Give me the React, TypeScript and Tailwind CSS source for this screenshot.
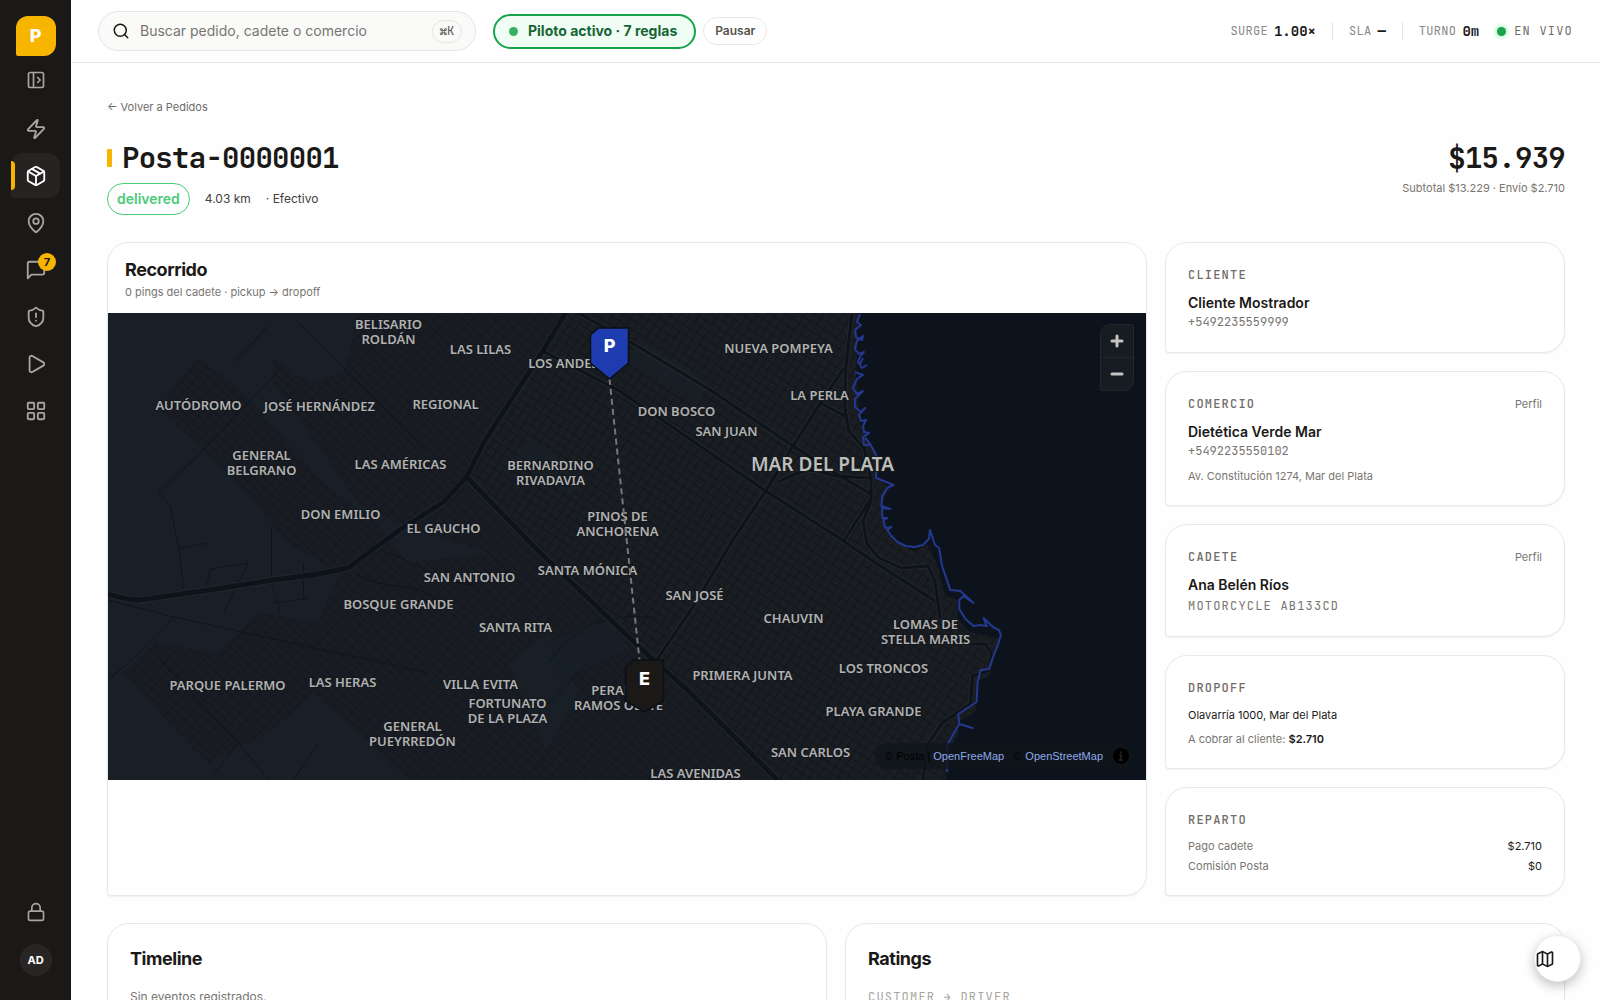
import type { ReactNode } from "react";
import { LayoutGrid, Lock, Map, MapPin, Package, PanelLeftOpen, Play, Search, ShieldAlert, Zap } from "lucide-react";

const CARD = "bg-white border border-[#e9e9e8] rounded-[22px] rounded-bl-[4px] shadow-[0_1px_2px_rgba(0,0,0,0.06)]";
const MONO = "font-['JetBrains_Mono','Liberation_Mono',monospace]";

function MessageIcon() {
  return (
    <svg width="22" height="22" viewBox="0 0 24 24" fill="none" stroke="currentColor" strokeWidth="2" strokeLinecap="round" strokeLinejoin="round">
      <path d="M21 15a2 2 0 0 1-2 2H7l-4 4V5a2 2 0 0 1 2-2h14a2 2 0 0 1 2 2z" />
    </svg>
  );
}

interface NavItemProps {
  label: string;
  active?: boolean;
  badge?: number;
  children: ReactNode;
}

function NavItem({ label, active, badge, children }: NavItemProps) {
  return (
    <a
      href="#"
      aria-label={label}
      className={`relative flex h-[45px] w-[49px] items-center justify-center rounded-xl rounded-bl-[2px] ${
        active ? "bg-[#262322] text-white" : "text-[#a8a5a1]"
      }`}
    >
      {active && <span className="absolute left-0 top-2 h-[29px] w-[4px] rounded-r-sm bg-[#f7b500]" />}
      {children}
      {badge && (
        <span className="absolute right-[4px] top-[6px] flex h-[18px] w-[18px] items-center justify-center rounded-full bg-[#f7b500] text-[11px] font-bold text-[#1b1917]">
          {badge}
        </span>
      )}
    </a>
  );
}

function Sidebar() {
  return (
    <aside className="flex h-full w-[71px] shrink-0 flex-col items-center bg-[#1b1917] pb-6 pt-4">
      <a href="#" className="flex h-10 w-10 items-center justify-center rounded-xl rounded-bl-[2px] bg-[#f7b500] text-lg font-extrabold text-white">
        P
      </a>
      <button aria-label="Expandir menú" className="mt-[14px] text-[#a8a5a1]">
        <PanelLeftOpen size={20} />
      </button>
      <nav className="mt-4 flex flex-col gap-[2px]">
        <NavItem label="Centro de control"><Zap size={22} /></NavItem>
        <NavItem label="Pedidos" active><Package size={22} /></NavItem>
        <NavItem label="Mapa"><MapPin size={22} /></NavItem>
        <NavItem label="Mensajes" badge={7}><MessageIcon /></NavItem>
        <NavItem label="Alertas"><ShieldAlert size={22} /></NavItem>
        <NavItem label="Simulador"><Play size={22} /></NavItem>
        <NavItem label="Más"><LayoutGrid size={22} /></NavItem>
      </nav>
      <button aria-label="Bloquear sesión" className="mt-auto text-[#a8a5a1]">
        <Lock size={20} />
      </button>
      <button className="mt-[22px] h-8 w-8 rounded-full bg-[#292524] text-[11px] font-bold text-white">AD</button>
    </aside>
  );
}

function Metric({ label, value }: { label: string; value: string }) {
  return (
    <div className="flex items-center gap-[6px]">
      <span className="text-xs tracking-wide text-[#8b8884]">{label}</span>
      <span className="text-sm font-bold text-[#1b1917]">{value}</span>
    </div>
  );
}

function TopBar() {
  return (
    <header className="flex h-[63px] shrink-0 items-center border-b border-[#e9e9e8] bg-white px-[27px]">
      <label className="flex h-10 w-[378px] items-center rounded-full border border-[#e7e5e4] bg-[#fafaf9] px-[13px]">
        <Search size={18} className="shrink-0 text-[#1b1917]" />
        <input
          type="search"
          aria-label="Buscar"
          placeholder="Buscar pedido, cadete o comercio"
          className="ml-[10px] min-w-0 flex-1 bg-transparent text-sm outline-none placeholder:text-[#787571]"
        />
        <kbd className={`${MONO} flex h-[23px] w-[30px] shrink-0 items-center justify-center rounded-full border border-[#e7e5e4] text-xs text-[#57534e]`}>⌘K</kbd>
      </label>
      <button className="ml-[17px] flex h-[35px] items-center gap-[10px] rounded-full border-2 border-[#16a34a] bg-[#f0fdf4] pl-[14px] pr-[17px] text-sm font-bold text-[#166534]">
        <span className="h-[9px] w-[9px] rounded-full bg-[#38b164]" />
        Piloto activo · 7 reglas
      </button>
      <button className="ml-[7px] h-[28px] rounded-full border border-[#e9e9e8] bg-white px-[11px] text-xs font-semibold text-[#57534e]">Pausar</button>
      <div className={`${MONO} ml-auto flex items-center whitespace-nowrap`}>
        <Metric label="SURGE" value="1.00×" />
        <span className="mx-4 h-[18px] w-px bg-[#e7e5e4]" />
        <Metric label="SLA" value="—" />
        <span className="mx-4 h-[18px] w-px bg-[#e7e5e4]" />
        <Metric label="TURNO" value="0m" />
        <span className="ml-[18px] h-[9px] w-[9px] rounded-full bg-[#16a34a] shadow-[0_0_4px_2px_#bbf7d0]" />
        <span className="ml-2 text-xs tracking-widest text-[#6f6c68]">EN VIVO</span>
      </div>
    </header>
  );
}

type MapLabel = [x: number, y: number, ...lines: string[]];

const LABELS: MapLabel[] = [
  [280, 11, "BELISARIO", "ROLDÁN"],
  [372, 36, "LAS LILAS"],
  [455, 50, "LOS ANDES"],
  [670, 35, "NUEVA POMPEYA"],
  [711, 82, "LA PERLA"],
  [568, 98, "DON BOSCO"],
  [618, 118, "SAN JUAN"],
  [90, 92, "AUTÓDROMO"],
  [211, 93, "JOSÉ HERNÁNDEZ"],
  [337, 91, "REGIONAL"],
  [153, 142, "GENERAL", "BELGRANO"],
  [292, 151, "LAS AMÉRICAS"],
  [442, 152, "BERNARDINO", "RIVADAVIA"],
  [232, 201, "DON EMILIO"],
  [335, 215, "EL GAUCHO"],
  [509, 203, "PINOS DE", "ANCHORENA"],
  [361, 264, "SAN ANTONIO"],
  [479, 257, "SANTA MÓNICA"],
  [290, 291, "BOSQUE GRANDE"],
  [407, 314, "SANTA RITA"],
  [586, 282, "SAN JOSÉ"],
  [685, 305, "CHAUVIN"],
  [817, 311, "LOMAS DE", "STELLA MARIS"],
  [634, 362, "PRIMERA JUNTA"],
  [775, 355, "LOS TRONCOS"],
  [765, 398, "PLAYA GRANDE"],
  [702, 439, "SAN CARLOS"],
  [587, 460, "LAS AVENIDAS"],
  [119, 372, "PARQUE PALERMO"],
  [234, 369, "LAS HERAS"],
  [372, 371, "VILLA EVITA"],
  [399, 390, "FORTUNATO", "DE LA PLAZA"],
  [304, 413, "GENERAL", "PUEYRREDÓN"],
  [510, 377, "PERALTA", "RAMOS OESTE"],
];

const COAST =
  "M748 0l-3 8 4 3-6 5 1 7 6 3 1-4-6 5-2 8 4 5 5-2-4 5-2 5 4 6 5-3M751 44l-3 6M743 58l8 3-6 4-4 9 4 6 6-3-8 8v8l6 5 4-4-6 7 2 6 5-1-3 6 1 6 5 1-6 4 1 8 6 0M753 124l5 6 6 11v23l17 7-6 3-5 8-1 10 9 3-8-1 0 10 5 0-4 2 2 8 6-1-4 3 4 6 6 6 8 4 9 1 8-2 6-6 1-9 5 15 4 3 3 18 8 24 10 1 13 12-10-7-4 4 0 9 6 10 8 7 7-1 6 1-3-8 9 9 6 3 2 5-3 10-4 10-5 14-8 1-3 12-1 20-18 12 1 10 13 4-13-4-6 10-6 11v27";
const LAND =
  "M-4-4H746L744 60 748 110 764 141V164L776 173 770 190 771 207 780 226 802 238 814 230 824 250 832 282 844 286 844 304 856 318 885 325 879 350 874 363 864 366 862 397 844 409 845 419 833 440V470H-4Z";
const HIGHWAYS = [
  "M457 0 435 37 398 94 375 130 358 164 335 189 291 217 265 236 241 254C215 262 190 263 165 267L101 277 31 287C18 287 10 283-4 281",
  "M358 164 428 236 518 322 545 347 579 377 669 467",
];
const AVENUES = [
  "M435 37 460 50 511 77 655 177 729 225 765 250 822 287",
  "M472 0 520 27 602 77 682 132 725 160 759 180",
  "M732 54 709 89 682 132 655 177 622 227 585 290 545 350",
  "M740 0 734 54 733 94 737 117 752 134 759 164 759 187 751 207 755 230 767 244 789 254 815 252 822 267 827 304",
  "M709 89 733 102",
  "M668 168C690 156 700 152 722 162L759 164M759 184 732 227",
  "M858 330H872L878 340 874 357 859 362 857 390 829 409 815 430 810 467",
];
const MINOR =
  "M0 287 65 304 230 340 320 360M65 304 20 350 0 366M50 180 92 140 168 60M50 180 62 193 71 240 75 276M163 215V270L172 300M71 235 100 230M98 272 102 256 140 250M160 13 125 50M190 10 230 50 320 140M50 345 130 430 98 470M130 430 160 467M210 430 185 467M440 350C470 310 500 300 545 305M280 240C310 250 330 270 370 273M250 262C280 280 310 266 330 290M195 250V285M165 290 200 285M115 300 140 250M430 400 480 350";
const OUTER_BLOCKS =
  "M88 45 125 70 215 170 262 205 300 250 380 240 420 270 440 320 400 350 450 467 300 467 250 420 205 380 160 420 100 450 60 410 15 360 45 330 110 340 150 300 210 310 230 260 180 230 130 170 50 95ZM165 45 200 70 235 60 250 0 457 0 358 164 300 215 250 190 165 70Z";
const CENTRE_BLOCKS = "M457-4H900V470H669L545 347 358 164Z";
const SOUTH_BLOCKS = "M358 164 669 467H420L470 380 430 300 380 240 300 215Z";
const COAST_TRANSFORM = "matrix(1.014 0 0 1 -7 1)";

function RouteMap() {
  return (
    <div className="relative h-[467px] overflow-hidden bg-[#0c131d]">
      <svg viewBox="-1 0 1039 467" preserveAspectRatio="xMidYMid slice" className="h-full w-full" role="img" aria-label="Recorrido en Mar del Plata">
        <defs>
          <pattern id="centre" width="8" height="8" patternUnits="userSpaceOnUse" patternTransform="rotate(33)">
            <path d="M0 0H8M0 0V8" stroke="#0e1319" strokeWidth="1.4" fill="none" />
          </pattern>
          <pattern id="outer" width="9" height="7" patternUnits="userSpaceOnUse" patternTransform="rotate(43)">
            <path d="M0 0H9M0 0V7" stroke="#0f141a" strokeWidth="1" fill="none" />
          </pattern>
          <clipPath id="land"><path d={LAND} transform={COAST_TRANSFORM} /></clipPath>
        </defs>
        <path d="M-4 0H60V467H-4Z" fill="#181f27" />
        <path d={LAND} transform={COAST_TRANSFORM} fill="#181f27" />
        <g clipPath="url(#land)">
          <path d={OUTER_BLOCKS} fill="#191c20" fillOpacity="0.5" />
          <path d={OUTER_BLOCKS} fill="url(#outer)" />
          <path d={CENTRE_BLOCKS} fill="#1a1e22" />
          <path d={CENTRE_BLOCKS} fill="url(#centre)" />
          <path d={SOUTH_BLOCKS} fill="#191c20" fillOpacity="0.5" />
          <path d={SOUTH_BLOCKS} fill="url(#outer)" />
          <path d="M530 25 600 70 590 90 520 50ZM420 125 480 165 465 180 405 150ZM440 330 500 305 520 335 450 370Z" fill="#181f27" fillOpacity="0.8" />
          <path d={MINOR} fill="none" stroke="#10151b" strokeWidth="1" />
          <g fill="none" strokeLinejoin="round">
            <g transform={COAST_TRANSFORM}>
              {AVENUES.map((d) => <path key={d} d={d} stroke="#22272d" strokeWidth="5" />)}
            </g>
            {HIGHWAYS.map((d) => <path key={d} d={d} stroke="#22272d" strokeWidth="7" />)}
            <g transform={COAST_TRANSFORM}>
              {AVENUES.map((d) => <path key={d} d={d} stroke="#0e131a" strokeWidth="3" />)}
            </g>
            {HIGHWAYS.map((d) => <path key={d} d={d} stroke="#0e131a" strokeWidth="5" />)}
          </g>
        </g>
        <path d={COAST} transform={COAST_TRANSFORM} fill="none" stroke="#24388f" strokeWidth="2" strokeLinejoin="round" />

        <g fill="#b1b1b0" stroke="#15191f" strokeWidth="2" paintOrder="stroke" textAnchor="middle" className="font-['Noto_Sans',sans-serif] text-[13px] font-semibold">
          {LABELS.map(([x, y, ...lines]) => (
            <text key={`${x}-${y}`} x={x} y={y + 5}>
              {lines.map((line, i) => <tspan key={line} x={x} dy={i * 15}>{line}</tspan>)}
            </text>
          ))}
          <text x="714" y="158" className="text-[19px]" fill="#bdbdb9">MAR DEL PLATA</text>
        </g>

        <path d="M501 66 531 347" stroke="#777776" strokeWidth="2" strokeDasharray="6 4" />
        <g strokeWidth="1.5" stroke="#0b0f16">
          <path d="M490 15H520V50L501 66 482 50V22Z" fill="#1e3caf" />
          <path d="M525 347H555V388L536 399 517 388V354Z" fill="#1b1917" />
        </g>
        <g fill="#fff" textAnchor="middle" className="font-['Inter',sans-serif] text-[18px] font-extrabold">
          <text x="501" y="39">P</text>
          <text x="536" y="372">E</text>
        </g>
      </svg>

      <div className="absolute right-3 top-[11px] flex w-[34px] flex-col overflow-hidden rounded-[10px] rounded-bl-[2px] rounded-tr-[2px] border border-[#22272d] bg-[#171c22] text-[#c4c4c2]">
        <button aria-label="Acercar" className="flex h-[33px] items-center justify-center border-b border-[#22272d]">
          <svg width="14" height="14" viewBox="0 0 14 14" stroke="currentColor" strokeWidth="3" strokeLinecap="round"><path d="M7 2V12M2 7H12" /></svg>
        </button>
        <button aria-label="Alejar" className="flex h-[32px] items-center justify-center">
          <svg width="14" height="14" viewBox="0 0 14 14" stroke="currentColor" strokeWidth="3" strokeLinecap="round"><path d="M2 7H12" /></svg>
        </button>
      </div>

      <div className="absolute bottom-[11px] right-3 flex h-[26px] items-center rounded-full bg-[#10151b]/80 pl-[10px] pr-[5px] font-['Liberation_Sans',sans-serif] text-[11px] text-black">
        <span className="whitespace-pre">© Posta | </span>
        <a href="#" className="text-[#8ea9ea]">OpenFreeMap</a>
        <span className="ml-[9px] mr-1">©</span>
        <a href="#" className="text-[#8ea9ea]">OpenStreetMap</a>
        <button aria-label="Información del mapa" className="ml-[10px] flex h-4 w-4 items-center justify-center rounded-full bg-black text-[#1d2126]">
          <svg width="16" height="16" viewBox="0 0 16 16" stroke="currentColor" strokeWidth="2"><path d="M8 3.5V5.5M6.5 7.5H8V11.5M6 12H10" /></svg>
        </button>
      </div>
    </div>
  );
}

interface SideCardProps {
  title: string;
  profile?: boolean;
  className: string;
  children: ReactNode;
}

function SideCard({ title, profile, className, children }: SideCardProps) {
  return (
    <section className={`${CARD} px-[22px] pt-[22px] ${className}`}>
      <div className="flex h-[20px] items-center justify-between">
        <h3 className={`${MONO} text-xs font-medium tracking-widest text-[#6f6c68]`}>{title}</h3>
        {profile && <a href="#" className="text-[11px] text-[#787571]">Perfil</a>}
      </div>
      {children}
    </section>
  );
}

export default function App() {
  return (
    <div className="flex h-screen overflow-hidden bg-[#fefefe] font-['Inter',sans-serif] text-[#1b1917]">
      <Sidebar />
      <div className="flex min-w-0 flex-1 flex-col">
        <TopBar />
        <main className="min-h-0 flex-1 overflow-y-auto pb-9 pl-[36px] pr-[35px] pt-[36px] [scrollbar-width:none]">
          <a href="#" className="block w-fit text-[11px] leading-4 text-[#6f6c68]">← Volver a Pedidos</a>

          <div className="mt-[25px] flex items-start justify-between">
            <div>
              <h1 className={`${MONO} flex h-[36px] items-center gap-[10px] text-[29px] font-bold tracking-tight`}>
                <span className="h-[18px] w-[5px] rounded-[1px] bg-[#f7b500]" />
                Posta-0000001
              </h1>
              <div className="mt-[7px] flex items-center text-xs text-[#44403c]">
                <span className="flex h-[32px] items-center rounded-full border border-[#4ccb7a] px-[9px] text-sm font-semibold text-[#4ccb7a]">delivered</span>
                <span className="ml-[15px]">4.03 km</span>
                <span className="ml-[15px]">· Efectivo</span>
              </div>
            </div>
            <div className="text-right">
              <p className={`${MONO} h-[36px] text-[29px] font-bold leading-[36px] tracking-tight`}>$15.939</p>
              <p className="mt-[4px] text-[11px] leading-4 text-[#787571]">Subtotal $13.229 · Envío $2.710</p>
            </div>
          </div>

          <div className="mt-[27px] grid grid-cols-[minmax(0,1fr)_400px] gap-[18px]">
            <section className={`${CARD} overflow-hidden`}>
              <div className="h-[70px] px-[17px] pt-[15px]">
                <h2 className="text-lg font-bold leading-6 tracking-tight">Recorrido</h2>
                <p className="mt-[2px] text-[11px] leading-4 text-[#787571]">0 pings del cadete · pickup → dropoff</p>
              </div>
              <RouteMap />
            </section>

            <div className="flex flex-col gap-[18px]">
              <SideCard title="CLIENTE" className="pb-[22px]">
                <p className="mt-[7px] text-sm font-semibold leading-[22px]">Cliente Mostrador</p>
                <p className={`${MONO} text-xs leading-4 text-[#787571]`}>+5492235559999</p>
              </SideCard>
              <SideCard title="COMERCIO" profile className="pb-[21px]">
                <p className="mt-[7px] text-sm font-semibold leading-[22px]">Dietética Verde Mar</p>
                <p className={`${MONO} text-xs leading-4 text-[#787571]`}>+5492235550102</p>
                <p className="mt-[9px] text-[11px] leading-4 text-[#787571]">Av. Constitución 1274, Mar del Plata</p>
              </SideCard>
              <SideCard title="CADETE" profile className="pb-5">
                <p className="mt-[7px] text-sm font-semibold leading-[22px]">Ana Belén Ríos</p>
                <p className={`${MONO} text-xs leading-5 tracking-widest text-[#787571]`}>MOTORCYCLE AB133CD</p>
              </SideCard>
              <SideCard title="DROPOFF" className="pb-[21px]">
                <p className="mt-[9px] text-[11px] leading-4">Olavarría 1000, Mar del Plata</p>
                <p className="mt-[8px] text-[11px] leading-4 text-[#787571]">
                  A cobrar al cliente: <strong className="font-semibold text-[#1b1917]">$2.710</strong>
                </p>
              </SideCard>
              <SideCard title="REPARTO" className="pb-[21px]">
                <dl className="mt-[8px] flex flex-col gap-[4px] text-[11px] leading-4">
                  <div className="flex justify-between">
                    <dt className="text-[#787571]">Pago cadete</dt>
                    <dd>$2.710</dd>
                  </div>
                  <div className="flex justify-between">
                    <dt className="text-[#787571]">Comisión Posta</dt>
                    <dd>$0</dd>
                  </div>
                </dl>
              </SideCard>
            </div>
          </div>

          <div className="mt-[27px] grid grid-cols-2 gap-[18px]">
            <section className={`${CARD} px-[22px] pb-[22px] pt-[23px]`}>
              <h2 className="text-lg font-bold leading-6 tracking-tight">Timeline</h2>
              <p className="mt-[16px] text-xs leading-5 text-[#787571]">Sin eventos registrados.</p>
            </section>
            <section className={`${CARD} px-[22px] pb-[22px] pt-[23px]`}>
              <h2 className="text-lg font-bold leading-6 tracking-tight">Ratings</h2>
              <p className={`${MONO} mt-[18px] text-xs leading-4 tracking-widest text-[#a8a5a1]`}>CUSTOMER → DRIVER</p>
              <p className="mt-2 text-xs text-[#787571]">—</p>
            </section>
          </div>
        </main>
      </div>
      <button aria-label="Ver mapa" className="fixed bottom-[18px] right-[19px] flex h-[47px] w-[47px] items-center rounded-full border border-[#ececeb] bg-white shadow-[0_4px_12px_rgba(0,0,0,0.25)]">
        <Map size={20} />
      </button>
    </div>
  );
}
